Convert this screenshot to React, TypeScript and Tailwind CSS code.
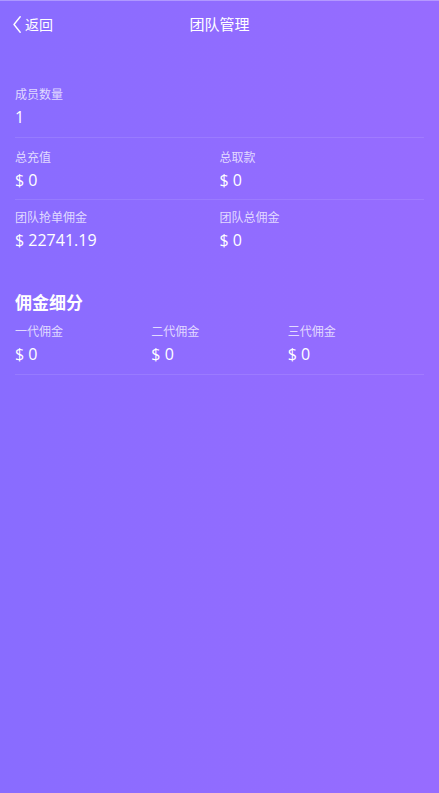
const font = { fontFamily: '"Noto Sans CJK SC", "Noto Sans", sans-serif' };

function Stat({ label, value }: { label: string; value: string }) {
  return (
    <div className="flex flex-col">
      <span className="text-[12px] leading-[16px] text-white/75">{label}</span>
      <span className="mt-[5px] text-[16px] leading-[20px] text-white" style={{ fontFamily: '"Open Sans", "Noto Sans", sans-serif' }}>
        {value}
      </span>
    </div>
  );
}

export default function App() {
  return (
    <div
      className="min-h-[793px] w-full bg-gradient-to-r from-[#896cff] to-[#976cff] border-t border-white/30"
      style={font}
    >
      <header className="relative flex h-[46px] items-center pl-[13px]">
        <div className="flex items-center gap-[4px] text-white">
          <svg width="8" height="17" viewBox="0 0 8 17" fill="none">
            <path d="M7.2 0.8L1 8.5l6.2 7.7" stroke="currentColor" strokeWidth="1.4" strokeLinecap="round" strokeLinejoin="round" />
          </svg>
          <span className="text-[14px]">返回</span>
        </div>
        <h1 className="absolute left-1/2 -translate-x-1/2 text-[15px] text-white">团队管理</h1>
      </header>

      <main className="px-[15px] pt-[39px]">
        <div className="border-b border-white/10 pb-[10px]">
          <Stat label="成员数量" value="1" />
        </div>
        <div className="grid grid-cols-2 border-b border-white/10 pt-[11px] pb-[9px]">
          <Stat label="总充值" value="$ 0" />
          <Stat label="总取款" value="$ 0" />
        </div>
        <div className="grid grid-cols-2 pt-[9px]">
          <Stat label="团队抢单佣金" value="$ 22741.19" />
          <Stat label="团队总佣金" value="$ 0" />
        </div>

        <h2 className="mt-[40px] text-[17px] font-bold leading-[24px] text-white">佣金细分</h2>
        <div className="mt-[9px] grid grid-cols-3 border-b border-white/10 pb-[10px]">
          <Stat label="一代佣金" value="$ 0" />
          <Stat label="二代佣金" value="$ 0" />
          <Stat label="三代佣金" value="$ 0" />
        </div>
      </main>
    </div>
  );
}
